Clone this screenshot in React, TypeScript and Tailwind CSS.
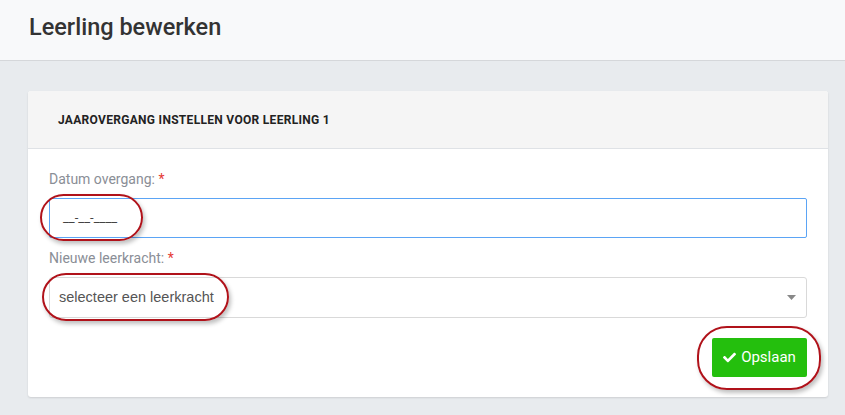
import React from 'react';
import { FaCheck } from 'react-icons/fa';

export default function App() {
  return (
    <div className="relative w-[845px] h-[415px] overflow-hidden bg-[#e8ebee] font-['Roboto',sans-serif]">
      <header className="h-[61px] bg-[#f8f9fa] border-b border-[#d5d7da] flex items-center pl-[29px]">
        <h1 className="text-[23.5px] text-[#333] font-medium leading-none pb-[4px]">Leerling bewerken</h1>
      </header>

      <main className="pt-[30px] pl-[28px] pr-[17px]">
        <section className="bg-white rounded-[3px] shadow-[0_1px_2px_rgba(0,0,0,0.12)]">
          <div className="h-[58px] bg-[#f5f5f5] border-b border-[#dfe2e6] rounded-t-[3px] flex items-center pl-[30px]">
            <h2 className="text-[12px] font-bold uppercase tracking-[0.3px] text-[#222]">
              Jaarovergang instellen voor leerling 1
            </h2>
          </div>

          <div className="px-[21px] pt-[20px] pb-[20px]">
            <FieldLabel text="Datum overgang:" />
            <div className="h-[40px] border border-[#5ba4f5] rounded-[2px] flex items-center pl-[13px] mb-[10px]">
              <span className="text-[13px] text-[#444]">__-__-____</span>
            </div>

            <FieldLabel text="Nieuwe leerkracht:" />
            <div className="h-[41px] border border-[#d9d9d9] rounded-[3px] flex items-center justify-between pl-[9px] pr-[10px]">
              <span className="text-[14.5px] text-[#555] font-['Liberation_Sans',sans-serif]">selecteer een leerkracht</span>
              <svg width="9" height="5" viewBox="0 0 9 5"><path d="M0 0h9L4.5 5z" fill="#888" /></svg>
            </div>

            <div className="flex justify-end mt-[20px]">
              <button className="h-[39px] w-[95px] bg-[#24bf0d] rounded-[2px] text-white text-[15px] flex items-center justify-center gap-[5px]">
                <FaCheck className="w-[13px] h-[13px]" />
                Opslaan
              </button>
            </div>
          </div>
        </section>
      </main>

      <Mark className="left-[40px] top-[194px] w-[103px] h-[47px] rounded-full" />
      <Mark className="left-[42px] top-[273px] w-[187px] h-[48px] rounded-full" />
      <Mark className="left-[697px] top-[326px] w-[124px] h-[64px] rounded-[30px]" />
    </div>
  );
}

function FieldLabel({ text }: { text: string }) {
  return (
    <div className="h-[20px] mb-[9px] text-[14px] leading-[20px] text-[#8a8e96]">
      {text} <span className="text-[#e53935]">*</span>
    </div>
  );
}

function Mark({ className }: { className: string }) {
  return (
    <div
      className={`absolute border-[2.5px] border-[#b0121a] shadow-[2px_3px_4px_rgba(0,0,0,0.25)] pointer-events-none ${className}`}
    />
  );
}
